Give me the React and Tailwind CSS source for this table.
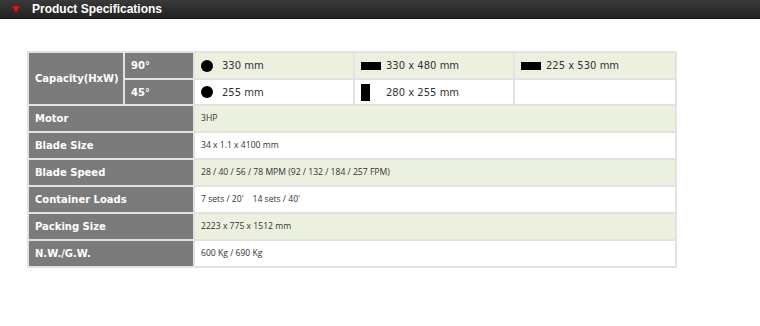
import React from "react";

const label = "bg-[#7b7b7b] text-white font-bold text-[10px] px-[6px] border-2 border-[#e2e2e2] text-left";
const cellG = "bg-[#ebf1de] border-2 border-[#e2e2e2] px-[6px]";
const cellW = "bg-white border-2 border-[#e2e2e2] px-[6px]";

const Dot = () => <span className="inline-block w-[12px] h-[12px] rounded-full bg-black mr-[9px]" />;
const Wide = () => <span className="inline-block w-[20px] h-[8px] bg-black mr-[5px]" />;
const Tall = () => <span className="inline-block w-[9px] h-[17px] bg-black mr-[16px]" />;

const rows = [
  ["Motor", "3HP"],
  ["Blade Size", "34 x 1.1 x 4100 mm"],
  ["Blade Speed", "28 / 40 / 56 / 78 MPM (92 / 132 / 184 / 257 FPM)"],
  ["Container Loads", "7 sets / 20'    14 sets / 40'"],
  ["Packing Size", "2223 x 775 x 1512 mm"],
  ["N.W./G.W.", "600 Kg / 690 Kg"],
];

const App = () => {
  return (
    <div className="w-[760px] h-[326px] bg-white" style={{ fontFamily: "'DejaVu Sans', Verdana, sans-serif" }}>
      <div className="h-[19px] bg-gradient-to-b from-[#3a3a3a] to-[#222] flex items-center border-b border-[#111]">
        <span className="ml-[12px] w-0 h-0 border-l-[4px] border-r-[4px] border-t-[7px] border-l-transparent border-r-transparent border-t-[#e01010]" />
        <span className="ml-[12px] text-white font-bold text-[12px]" style={{ fontFamily: "'Liberation Sans', Arial, sans-serif" }}>
          Product Specifications
        </span>
      </div>
      <div className="pt-[32px] pl-[27px]">
        <table className="border-collapse table-fixed w-[648px] text-[#333]">
          <colgroup>
            <col className="w-[96px]" />
            <col className="w-[70px]" />
            <col className="w-[160px]" />
            <col className="w-[160px]" />
            <col className="w-[162px]" />
          </colgroup>
          <tbody>
            <tr className="h-[27px]">
              <td rowSpan={2} className={label}>Capacity(HxW)</td>
              <td className={label}>90°</td>
              <td className={cellG + " text-[10px]"}>
                <div className="flex items-center"><Dot />330 mm</div>
              </td>
              <td className={cellG + " text-[10px]"}>
                <div className="flex items-center"><Wide />330 x 480 mm</div>
              </td>
              <td className={cellG + " text-[10px]"}>
                <div className="flex items-center"><Wide />225 x 530 mm</div>
              </td>
            </tr>
            <tr className="h-[26px]">
              <td className={label}>45°</td>
              <td className={cellW + " text-[10px]"}>
                <div className="flex items-center"><Dot />255 mm</div>
              </td>
              <td className={cellW + " text-[10px]"}>
                <div className="flex items-center"><Tall />280 x 255 mm</div>
              </td>
              <td className={cellW} />
            </tr>
            {rows.map(([k, v], i) => (
              <tr key={k} className="h-[27px]">
                <td colSpan={2} className={label}>{k}</td>
                <td
                  colSpan={3}
                  className={(i % 2 === 0 ? cellG : cellW) + " text-[8.6px] whitespace-pre"}
                  style={{ fontFamily: "'Open Sans', sans-serif" }}
                >
                  {v}
                </td>
              </tr>
            ))}
          </tbody>
        </table>
      </div>
    </div>
  );
};

export default App;
